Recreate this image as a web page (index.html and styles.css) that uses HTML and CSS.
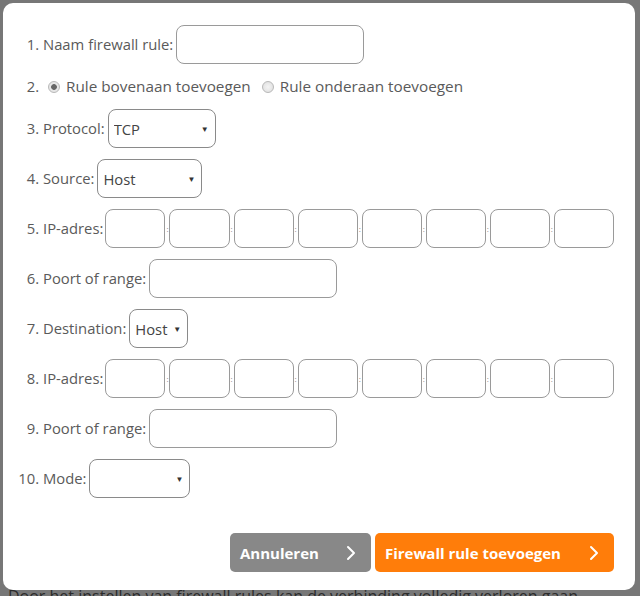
FILE: index.html
```html
<!DOCTYPE html>
<html lang="nl">
<head>
<meta charset="utf-8">
<title>Firewall rule toevoegen</title>
<link rel="stylesheet" href="styles.css">
</head>
<body>
<div class="page">
  <p class="page-text">Door het instellen van firewall rules kan de verbinding volledig verloren gaan</p>
</div>
<div class="modal">
  <ol class="form">
    <li class="row">
      <div class="line">
        <label class="lbl">Naam firewall rule:</label>
        <input class="field wide" type="text">
      </div>
    </li>
    <li class="row radio-row">
      <div class="line">
        <label class="radio"><input type="radio" name="pos" checked><span>Rule bovenaan toevoegen</span></label>
        <label class="radio"><input type="radio" name="pos"><span>Rule onderaan toevoegen</span></label>
      </div>
    </li>
    <li class="row">
      <div class="line">
        <label class="lbl">Protocol:</label>
        <span class="sel w-protocol"><select><option>TCP</option></select></span>
      </div>
    </li>
    <li class="row">
      <div class="line">
        <label class="lbl">Source:</label>
        <span class="sel w-source"><select><option>Host</option></select></span>
      </div>
    </li>
    <li class="row">
      <div class="line full">
        <label class="lbl">IP-adres:</label>
        <div class="ip"><input class="field oct" type="text"><span class="sep">:</span><input class="field oct" type="text"><span class="sep">:</span><input class="field oct" type="text"><span class="sep">:</span><input class="field oct" type="text"><span class="sep">:</span><input class="field oct" type="text"><span class="sep">:</span><input class="field oct" type="text"><span class="sep">:</span><input class="field oct" type="text"><span class="sep">:</span><input class="field oct" type="text"></div>
      </div>
    </li>
    <li class="row">
      <div class="line">
        <label class="lbl">Poort of range:</label>
        <input class="field wide" type="text">
      </div>
    </li>
    <li class="row">
      <div class="line">
        <label class="lbl">Destination:</label>
        <span class="sel w-dest"><select><option>Host</option></select></span>
      </div>
    </li>
    <li class="row">
      <div class="line full">
        <label class="lbl">IP-adres:</label>
        <div class="ip"><input class="field oct" type="text"><span class="sep">:</span><input class="field oct" type="text"><span class="sep">:</span><input class="field oct" type="text"><span class="sep">:</span><input class="field oct" type="text"><span class="sep">:</span><input class="field oct" type="text"><span class="sep">:</span><input class="field oct" type="text"><span class="sep">:</span><input class="field oct" type="text"><span class="sep">:</span><input class="field oct" type="text"></div>
      </div>
    </li>
    <li class="row">
      <div class="line">
        <label class="lbl">Poort of range:</label>
        <input class="field wide" type="text">
      </div>
    </li>
    <li class="row">
      <div class="line">
        <label class="lbl">Mode:</label>
        <span class="sel w-mode"><select><option></option></select></span>
      </div>
    </li>
  </ol>
  <div class="actions">
    <button class="btn btn-grey" type="button"><span>Annuleren</span>
      <svg width="10" height="16" viewBox="0 0 10 16"><polyline points="2,2 8,8 2,14" fill="none" stroke="#fff" stroke-width="2" stroke-linecap="round" stroke-linejoin="round"/></svg>
    </button>
    <button class="btn btn-orange" type="button"><span>Firewall rule toevoegen</span>
      <svg width="10" height="16" viewBox="0 0 10 16"><polyline points="2,2 8,8 2,14" fill="none" stroke="#fff" stroke-width="2" stroke-linecap="round" stroke-linejoin="round"/></svg>
    </button>
  </div>
</div>
</body>
</html>
```

FILE: styles.css
```css
html, body {
  margin: 0;
  padding: 0;
}
body {
  background: #777777;
  font-family: "Open Sans", "Liberation Sans", sans-serif;
  width: 640px;
  height: 596px;
  overflow: hidden;
  position: relative;
}
.page {
  padding: 586px 0 0 8px;
}
.page-text {
  margin: 0;
  font-size: 16px;
  line-height: 20px;
  color: #2b2b2b;
  white-space: nowrap;
}
.modal {
  position: absolute;
  left: 3px;
  top: 3px;
  width: 632px;
  height: 587px;
  background: #fff;
  border-radius: 10px;
  box-sizing: border-box;
  padding: 22px 21px 0 40px;
}
.form {
  margin: 0;
  padding: 0;
  list-style: decimal;
  color: #5a5a5a;
  font-size: 14.8px;
}
.row {
  display: list-item;
  height: 39px;
  line-height: 39px;
  margin-bottom: 11px;
}
.row::marker {
  color: #5a5a5a;
}
.line {
  display: inline-flex;
  align-items: center;
  gap: 3px;
  height: 39px;
  vertical-align: top;
}
.line.full {
  display: flex;
  gap: 2px;
}
.lbl {
  white-space: nowrap;
  flex-shrink: 0;
}
.radio-row,
.radio-row .line {
  height: 23px;
  line-height: 23px;
}
.radio-row .line {
  font-size: 15.3px;
}
.field {
  box-sizing: border-box;
  height: 39px;
  border: 1px solid #9a9a9a;
  border-radius: 8px;
  background: #fff;
  margin: 0;
  padding: 0 6px;
  font: inherit;
}
.wide {
  width: 188px;
}
.radio {
  display: inline-flex;
  align-items: center;
  margin-right: 3px;
  white-space: nowrap;
}
.radio input {
  appearance: none;
  -webkit-appearance: none;
  width: 12px;
  height: 12px;
  margin: 0 6px 0 5px;
  border: 1px solid #b8b8b8;
  border-radius: 50%;
  background: radial-gradient(circle, #f4f4f4 0%, #dcdcdc 100%);
  box-sizing: border-box;
}
.radio input:checked {
  background: radial-gradient(circle, #666 0, #666 2.5px, #e6e6e6 3.2px, #e6e6e6 100%);
}
.sel {
  position: relative;
  display: inline-block;
  height: 39px;
}
.sel select {
  appearance: none;
  -webkit-appearance: none;
  box-sizing: border-box;
  height: 39px;
  width: 100%;
  border: 1px solid #8a8a8a;
  border-radius: 8px;
  background: #fff;
  font: inherit;
  color: #444;
  padding: 0 18px 0 5px;
  margin: 0;
}
.sel::after {
  content: "▼";
  position: absolute;
  right: 7px;
  top: 0;
  line-height: 39px;
  font-size: 8px;
  color: #333;
  pointer-events: none;
}
.w-protocol { width: 108px; }
.w-source { width: 105px; }
.w-dest { width: 59px; }
.w-mode { width: 101px; }
.ip {
  display: flex;
  align-items: center;
  height: 39px;
  flex: 1 1 auto;
  min-width: 0;
}
.oct {
  flex: 1 1 60px;
  width: 60px;
  min-width: 0;
  padding: 0 4px;
}
.sep {
  flex: 0 0 4px;
  text-align: center;
  font-size: 8px;
  line-height: 10px;
  color: #888;
}
.actions {
  display: flex;
  justify-content: flex-end;
  gap: 4px;
  margin-top: 35px;
}
.btn {
  display: flex;
  align-items: center;
  justify-content: space-between;
  height: 39px;
  border: none;
  border-radius: 5px;
  color: #fff;
  font-family: "Open Sans", "Liberation Sans", sans-serif;
  font-weight: 700;
  font-size: 15px;
  padding: 0 15px 0 10px;
  box-sizing: border-box;
}
.btn-grey {
  width: 141px;
  background: #888888;
}
.btn-orange {
  width: 239px;
  background: #ff7d0a;
}
```
